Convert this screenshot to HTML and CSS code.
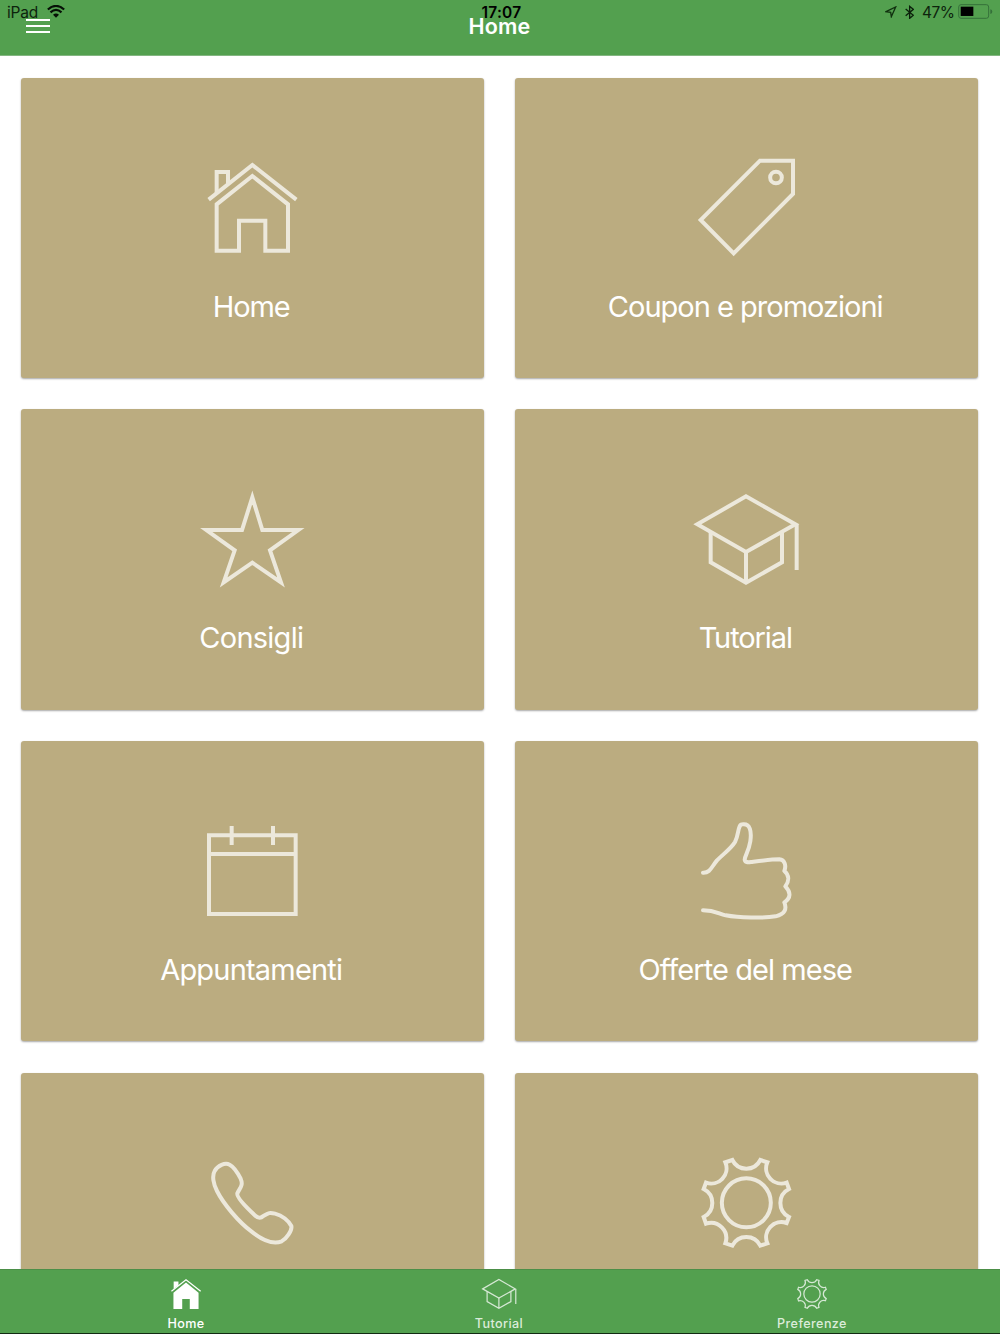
FILE: index.html
```html
<!DOCTYPE html>
<html lang="it">
<head>
<meta charset="utf-8">
<title>Home</title>
<link rel="stylesheet" href="styles.css">
</head>
<body>
<svg class="defs" aria-hidden="true">
  <defs>
    <g id="cap">
      <path d="M52 132 198 48 346 132 198 215Z"/>
      <path d="M92 154V246L198 307 306 246V154M198 215V307"/>
      <path d="M350 132V269"/>
    </g>
    <g id="gear">
      <circle cx="199" cy="173.500" r="73.500"/>
      <path d="M157 45A47 47 0 0 0 241 45L262 52A46 46 0 0 0 320 113L327 132A47 47 0 0 0 327 216L320 234A46 46 0 0 0 262 295L241 302A47 47 0 0 0 157 302L136 295A46 46 0 0 0 78 236L71 216A47 47 0 0 0 71 132L78 113A46 46 0 0 0 136 52Z"/>
    </g>
  </defs>
</svg>
<div class="app">
  <header class="navbar">
    <button class="menu" aria-label="Menu"><span></span><span></span><span></span></button>
    <h1 class="title">Home</h1>
    <div class="status">
      <div class="status-left">
        <span class="device">iPad</span>
        <svg class="wifi" viewBox="0 0 54 39"><g fill="none" stroke="#061006" stroke-width="6.500"><path d="M2.500 13.500Q27-8 51.500 13.500"/><path d="M10.500 22Q27 7 43.500 22"/></g><path fill="#061006" d="M18 29Q27 22 36 29L27 38Z"/></svg>
      </div>
      <span class="clock">17:07</span>
      <div class="status-right">
        <svg class="arrow" viewBox="0 0 36 36"><path fill="none" stroke="#10300f" stroke-width="4" d="M3 17 32 3 19 32 17 19Z"/></svg>
        <svg class="bluetooth" viewBox="0 0 28 44"><path fill="none" stroke="#0b200b" stroke-width="4" d="M2 12 25 31 14 40V4L25 13 2 32"/></svg>
        <span class="percent">47%</span>
        <svg class="battery" viewBox="0 0 104 46"><rect x="2" y="2" width="90" height="41" rx="7" fill="none" stroke="#35703a" stroke-width="3"/><rect x="8" y="8" width="38" height="28" fill="#000"/><path fill="#35703a" d="M97 16Q103 17 103 23T97 30Z"/></svg>
      </div>
    </div>
  </header>

  <main class="grid">
    <a class="card">
      <svg class="icon" viewBox="6 24 360 360"><path d="M56 179 187 75 319 179"/><path d="M80 161V96H114V134"/><path d="M187 108 294 193V332H226V242H147V332H80V193Z"/></svg>
      <span class="label home">Home</span>
    </a>
    <a class="card">
      <svg class="icon" viewBox="258 24 360 360"><path d="M480 62H579V162L401 340 302 240Z"/><circle cx="528" cy="112.500" r="17.500"/></svg>
      <span class="label coupon">Coupon e promozioni</span>
    </a>
    <a class="card">
      <svg class="icon" viewBox="6 -4 360 360"><path stroke-miterlimit="10" d="M187 51 217 149H325L240 210 273 306 187 247 101 306 134 210 49 149H156Z"/></svg>
      <span class="label consigli">Consigli</span>
    </a>
    <a class="card">
      <svg class="icon" viewBox="18 -4 360 360"><use href="#cap"/></svg>
      <span class="label tutorial">Tutorial</span>
    </a>
    <a class="card">
      <svg class="icon" viewBox="126 3 360 360"><path d="M177 76H437V312H177ZM177 132H437M245 48V105M369 48V105"/></svg>
      <span class="label appuntamenti">Appuntamenti</span>
    </a>
    <a class="card">
      <svg class="icon round" viewBox="18 3 360 360"><path d="M69 188C91 189 94 171 111 151C130 132 154 115 165 96C178 72 172 43 188 43C211 40 215 65 211 94C206 126 194 138 194 149C195 159 205 157 216 156C247 152 277 148 298 148C315 149 319 168 313 183C328 195 328 213 316 229C333 246 333 264 313 277C321 297 315 313 287 319C250 325 177 324 137 316C115 311 105 301 69 301"/></svg>
      <span class="label offerte">Offerte del mese</span>
    </a>
    <a class="card" aria-label="Telefono">
      <svg class="icon round" viewBox="6 -6 360 360"><path d="M74 78C83 61 105 52 119 59C132 66 146 89 152 101C161 122 149 129 142 145C139 156 166 184 196 212Q209 224 220 213C236 204 238 202 255 206C277 211 296 227 304 243C307 256 289 282 275 289C246 300 215 284 185 260C145 230 100 176 81 138C71 119 65 93 74 78Z"/></svg>
    </a>
    <a class="card" aria-label="Preferenze">
      <svg class="icon" viewBox="18 -6 360 360"><use href="#gear"/></svg>
    </a>
  </main>

  <nav class="tabs">
    <a class="tab active">
      <svg class="tab-icon" viewBox="7 23 360 360"><path fill="none" stroke="#fff" stroke-width="11" d="M56 179 187 75 319 179"/><path fill="#fff" d="M76 158V91H119V124ZM187 100 300 191V338H221V247H153V338H74V191Z"/></svg>
      <span>Home</span>
    </a>
    <a class="tab">
      <svg class="tab-icon line" viewBox="19 -2 360 360"><use href="#cap"/></svg>
      <span>Tutorial</span>
    </a>
    <a class="tab">
      <svg class="tab-icon line" viewBox="19 -6 360 360"><use href="#gear"/></svg>
      <span>Preferenze</span>
    </a>
  </nav>
</div>
</body>
</html>
```
FILE: styles.css
```css
* { box-sizing: border-box; }
body { margin: 0; font-family: Inter, "Liberation Sans", sans-serif; background: #fff; }
.defs { display: block; width: 0; height: 0; }
.app { display: flex; flex-direction: column; height: 1334px; overflow: hidden; }

.navbar {
  position: relative;
  flex: none;
  display: grid;
  grid-template-columns: 1fr auto 1fr;
  align-items: start;
  height: 56px;
  background: #53a04f;
  border-bottom: 1px solid #83b681;
}
.menu {
  display: flex;
  flex-direction: column;
  gap: 4px;
  width: 24px;
  margin: 19px 0 0 26px;
  padding: 0;
  border: 0;
  background: none;
}
.menu span { height: 2px; background: #fff; }
.title { margin: 13px 1px 0 0; font-size: 21.5px; line-height: 26px; font-weight: 600; color: #fff; letter-spacing: 0.2px; }
.status {
  position: absolute;
  inset: 0 0 auto 0;
  display: grid;
  grid-template-columns: 1fr auto 1fr;
  height: 24px;
  padding: 0 7px;
  align-items: center;
  font-size: 15.5px;
  line-height: 20px;
  color: #0d240d;
}
.status-left, .status-right { display: flex; align-items: center; }
.status-right { justify-content: flex-end; }
.device { padding-top: 1px; letter-spacing: -0.2px; }
.clock { padding: 1px 0 0 3px; font-weight: 600; color: #000; letter-spacing: 0.2px; }
.wifi { width: 18px; height: 13px; margin: 0 0 1px 9px; }
.arrow { width: 12px; height: 12px; margin-right: 8px; }
.bluetooth { width: 9.300px; height: 14.700px; margin-right: 8px; }
.percent { padding-top: 1px; letter-spacing: -0.6px; }
.battery { width: 34.700px; height: 15.300px; margin-left: 4px; }

.grid {
  flex: 1;
  min-height: 0;
  overflow: hidden;
  display: grid;
  grid-template-columns: 463px 463px;
  grid-auto-rows: 300.400px;
  gap: 31.200px 31px;
  padding: 21.800px 0 0 20.750px;
}
.card {
  display: flex;
  flex-direction: column;
  align-items: center;
  padding-top: 70px;
  border-radius: 3px;
  background: #bbac80;
  box-shadow: 0 1px 2px rgba(0, 0, 0, 0.35);
}
.icon { width: 120px; height: 120px; fill: none; stroke: #ece8db; stroke-width: 12; }
.icon.round { stroke-linecap: round; stroke-linejoin: round; }
.label { margin: 21px 2px 0 0; font-size: 29px; line-height: 36px; color: #fff; white-space: nowrap; }
.label.home { letter-spacing: -1.1px; }
.label.coupon { letter-spacing: -1px; }
.label.consigli { letter-spacing: -0.75px; }
.label.tutorial { letter-spacing: -1.1px; }
.label.appuntamenti { letter-spacing: -0.8px; }
.label.offerte { letter-spacing: -0.93px; }

.tabs {
  flex: none;
  display: grid;
  grid-template-columns: repeat(3, 313px);
  height: 65px;
  padding-left: 29.500px;
  background: #53a04f;
  border-top: 1px solid #4c8f48;
  border-bottom: 1px solid #122b12;
}
.tab {
  display: flex;
  flex-direction: column;
  align-items: center;
  padding-top: 4px;
  font-size: 12.600px;
  line-height: 16px;
  font-weight: 500;
  letter-spacing: 0.4px;
  color: #dcecdb;
}
.tab span { margin-top: 2px; }
.tab.active { color: #fff; }
.tab-icon { width: 40px; height: 40px; }
.tab-icon.line { fill: none; stroke: #d5e8d4; stroke-width: 11; }
```
